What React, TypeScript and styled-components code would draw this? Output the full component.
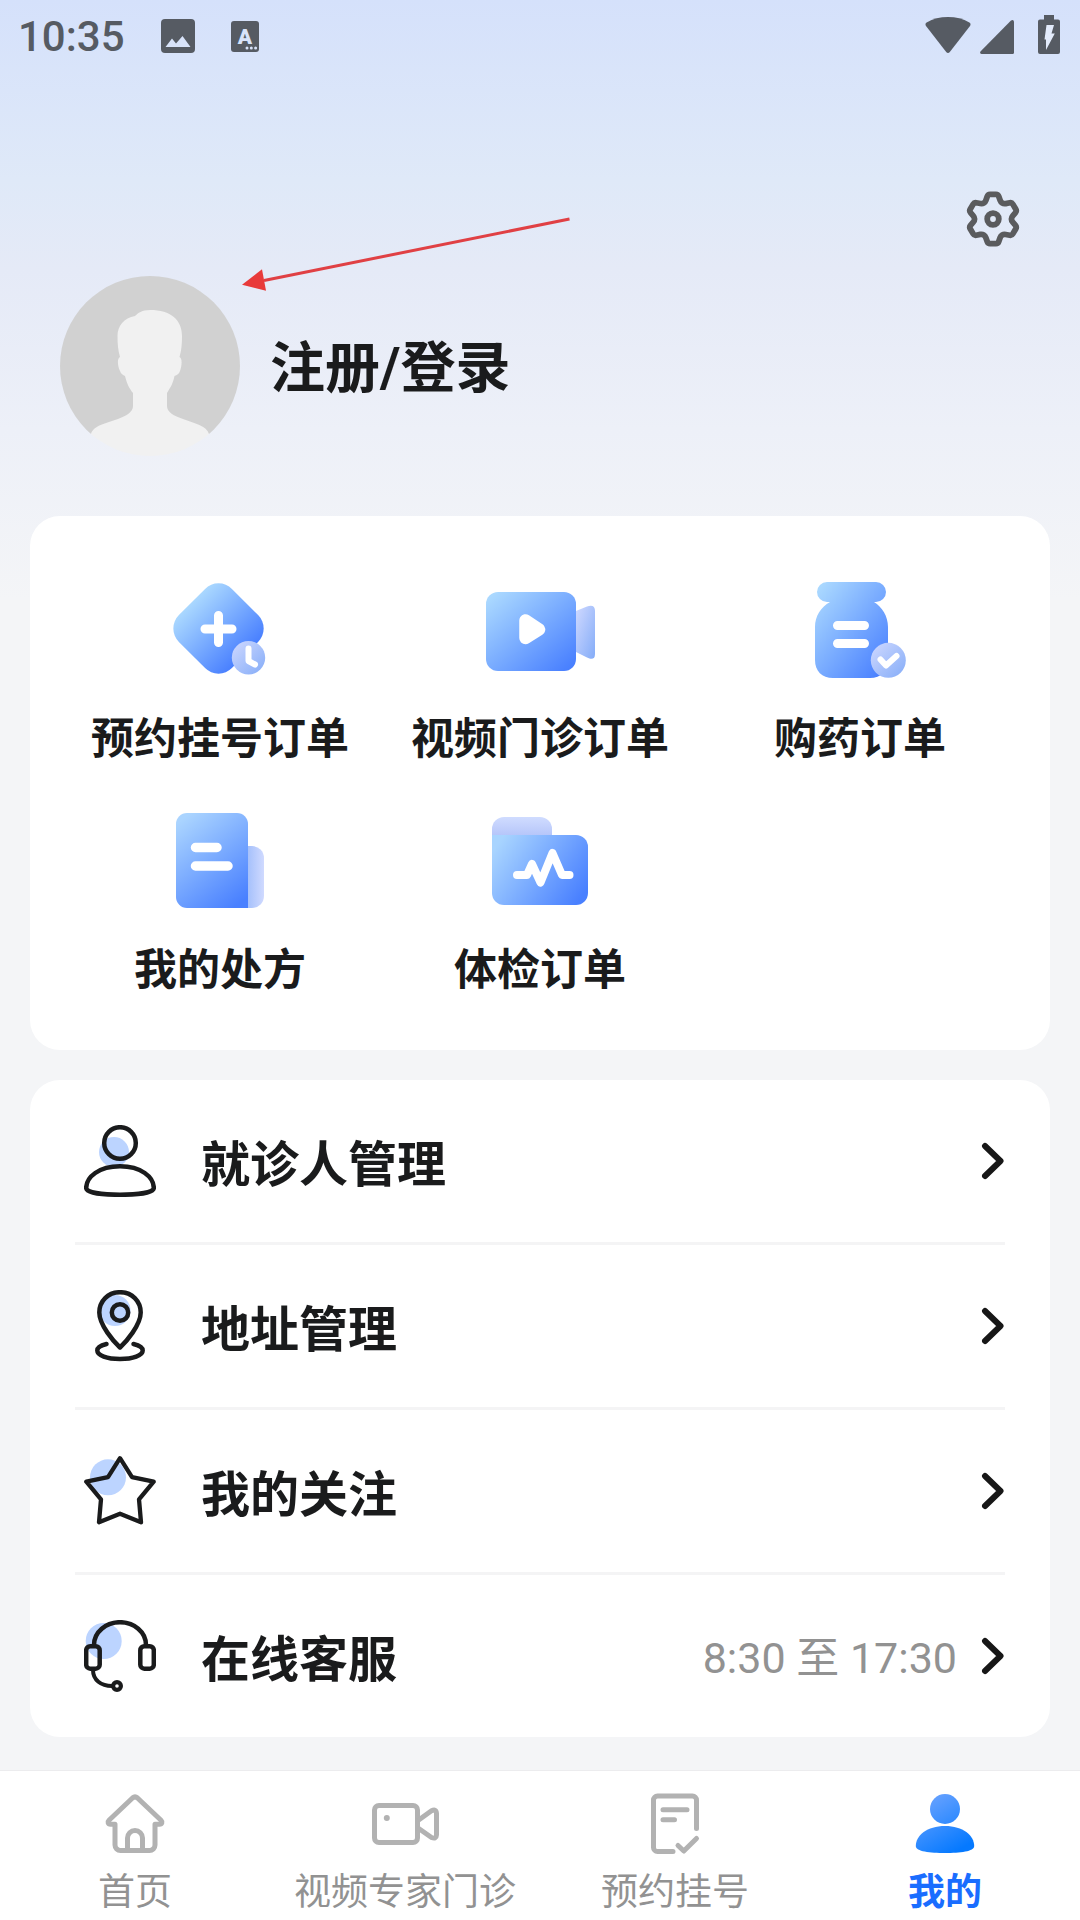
import React from "react";
import styled, { createGlobalStyle } from "styled-components";

const ink = "#1a1b1c";
const statusInk = "#565b63";
const cjkStack = '"Noto Sans CJK SC", sans-serif';

const GlobalStyle = createGlobalStyle`
  * { box-sizing: border-box; }
  body {
    margin: 0;
    background: #f4f5f7;
    color: ${ink};
    font-family: Roboto, "Noto Sans CJK SC", sans-serif;
  }
  a { color: inherit; text-decoration: none; }
  button { border: 0; padding: 0; background: none; color: inherit; font: inherit; cursor: pointer; }
  svg { display: block; flex: none; }
`;

const Page = styled.div`
  position: relative;
  display: flex;
  flex-direction: column;
  min-height: 100vh;
  background: linear-gradient(180deg, #d5e1fb 0, #dfe9f8 180px, #e5eaf7 270px, #edf0f8 430px, #f4f5f7 600px, #f4f5f7 100%);
`;

const StatusBar = styled.div`
  display: flex;
  align-items: center;
  justify-content: space-between;
  height: 72px;
  padding: 0 20px 0 18px;
`;

const StatusGroup = styled.div<{ $gap: number }>`
  display: flex;
  align-items: center;
  gap: ${(p) => p.$gap}px;
`;

const BatterySlot = styled.span`
  padding-left: 15px;
`;

const Clock = styled.time`
  padding-top: 2px;
  font-size: 42px;
  line-height: 48px;
  font-weight: 500;
  color: ${statusInk};
`;

const Header = styled.header`
  display: flex;
  flex-direction: column;
  gap: 30px;
  padding: 120px 60px 60px;
`;

const SettingsButton = styled.button`
  align-self: flex-end;
`;

const LoginButton = styled.button`
  display: flex;
  align-items: center;
  align-self: flex-start;
  gap: 30px;
`;

const LoginText = styled.span`
  padding-top: 4px;
  font-size: 55px;
  line-height: 72px;
  font-weight: 700;
`;

const Main = styled.main`
  display: flex;
  flex: 1;
  flex-direction: column;
  gap: 30px;
  padding: 0 30px 33px;
`;

const Card = styled.section`
  border-radius: 30px;
  background: #fff;
`;

const OrderGrid = styled(Card)`
  display: grid;
  grid-template-columns: repeat(3, 1fr);
  row-gap: 36px;
  padding: 54px 30px;
`;

const OrderLink = styled.a`
  display: flex;
  flex-direction: column;
  align-items: center;
  gap: 15px;
  font-family: ${cjkStack};
  font-size: 43px;
  line-height: 60px;
  font-weight: 700;
  white-space: nowrap;
`;

const MenuCard = styled(Card)`
  padding: 0 45px;
`;

const MenuRow = styled.a`
  display: flex;
  align-items: center;
  gap: 45px;
  padding: 45px 0 45px 9px;
  & + & { border-top: 3px solid #f4f4f5; }
`;

const MenuLabel = styled.span`
  flex: 1;
  font-family: ${cjkStack};
  font-size: 49px;
  line-height: 72px;
  font-weight: 700;
`;

const MenuEnd = styled.span`
  display: flex;
  align-items: center;
  gap: 24px;
`;

const MenuNote = styled.span`
  padding-top: 4px;
  font-size: 43px;
  line-height: 60px;
  color: #929292;
`;

const TabBar = styled.nav`
  display: grid;
  grid-template-columns: repeat(4, 1fr);
  padding: 17px 0 7px;
  border-top: 1px solid #ececee;
  background: #fff;
`;

const Tab = styled.a<{ $active?: boolean }>`
  display: flex;
  flex-direction: column;
  align-items: center;
  gap: 5px;
  font-family: ${cjkStack};
  font-size: 37px;
  line-height: 48px;
  font-weight: ${(p) => (p.$active ? 700 : 400)};
  color: ${(p) => (p.$active ? "#1a6dff" : "#929292")};
  white-space: nowrap;
`;

const Pointer = styled.svg`
  position: absolute;
  top: 216px;
  left: 240px;
  pointer-events: none;
`;

type Pt = [number, number];

/* Closed polygon whose corners are softened by `r`. */
function roundedPath(pts: Pt[], r: number) {
  const n = pts.length;
  const toward = (a: Pt, b: Pt): Pt => {
    const len = Math.hypot(b[0] - a[0], b[1] - a[1]);
    const t = Math.min(r, len / 2) / len;
    return [a[0] + (b[0] - a[0]) * t, a[1] + (b[1] - a[1]) * t];
  };
  return (
    pts
      .map((p, i) => {
        const s = toward(p, pts[(i + n - 1) % n]);
        const e = toward(p, pts[(i + 1) % n]);
        return `${i ? "L" : "M"}${s[0].toFixed(2)} ${s[1].toFixed(2)}Q${p[0].toFixed(2)} ${p[1].toFixed(2)} ${e[0].toFixed(2)} ${e[1].toFixed(2)}`;
      })
      .join("") + "Z"
  );
}

const gearPoints: Pt[] = Array.from({ length: 6 }).flatMap((_, k) => {
  const a = (k * Math.PI) / 3;
  const rot = (x: number, y: number): Pt => [
    27 + x * Math.cos(a) - y * Math.sin(a),
    27 + x * Math.sin(a) + y * Math.cos(a),
  ];
  return [rot(-5, -24.6), rot(5, -24.6), rot(7.8, -16.8), rot(10.7, -15.1)];
});

const GearIcon = () => (
  <svg width="54" height="54" viewBox="0 0 54 54" fill="none" stroke="#5a5b5d" strokeLinejoin="round" overflow="visible" aria-hidden="true">
    <path d={roundedPath(gearPoints, 2)} strokeWidth="5.8" />
    <circle cx="27" cy="27" r="5.8" strokeWidth="5.8" />
  </svg>
);

const PictureIcon = () => (
  <svg width="34" height="34" viewBox="0 0 34 34" aria-hidden="true">
    <rect width="34" height="34" rx="4" fill={statusInk} />
    <path d="M4.500 28 L11 19.500 L15 24.500 L21.500 17 L29.500 28Z" fill="#d8e3f9" />
  </svg>
);

const InputMethodIcon = () => (
  <svg width="28" height="31" viewBox="0 0 28 31" aria-hidden="true">
    <rect width="28" height="31" rx="3" fill={statusInk} />
    <text x="14" y="22.500" textAnchor="middle" fontFamily="Roboto, sans-serif" fontWeight="900" fontSize="21" fill="#d8e3f9">A</text>
    <g fill="#d8e3f9">
      <circle cx="16" cy="27" r="1.500" />
      <circle cx="20.300" cy="27" r="1.500" />
      <circle cx="24.600" cy="27" r="1.500" />
    </g>
  </svg>
);

const WifiIcon = () => (
  <svg width="46" height="40" viewBox="0 1 46 40" aria-hidden="true">
    <path d="M23 38 q-1 0 -1.800 -1 L1 11 q-1.300 -2.200 .6 -3.400 C8 3.800 15 2 23 2 S38 3.800 44.400 7.600 q1.900 1.200 .6 3.400 L24.800 37 q-.8 1 -1.800 1Z" fill={statusInk} />
  </svg>
);

const SignalIcon = () => (
  <svg width="34" height="40" viewBox="0 1 34 40" aria-hidden="true">
    <path d="M1.500 39 q-2.400 -.5 -.8 -2.700 L31 5.500 q2.500 -1.500 3 1 V37.500 q0 1.500 -1.500 1.500Z" fill={statusInk} />
  </svg>
);

const BatteryIcon = () => (
  <svg width="22" height="40" viewBox="0 1 22 40" overflow="visible" aria-hidden="true">
    <path d="M6 0 H16 V4.500 H20 a2 2 0 0 1 2 2 V37 a2 2 0 0 1 -2 2 H2 a2 2 0 0 1 -2 -2 V6.500 a2 2 0 0 1 2 -2 H6Z" fill={statusInk} />
    <path d="M8.500 10 H16 L13.500 18.500 H16.800 L8 35 V24.500 H6.500Z" fill="#e3ebfb" />
  </svg>
);

const Avatar = () => (
  <svg width="180" height="180" viewBox="0 0 180 180" aria-hidden="true">
    <clipPath id="avatarClip"><circle cx="90" cy="90" r="90" /></clipPath>
    <g clipPath="url(#avatarClip)">
      <path d="M0 0H180V158H0Z" fill="#d1d1d1" />
      <path
        fill="#f1f1f1"
        d="M90 34 C82 34 78 37 75 40 C64 42 57.500 50 57.500 60 C57.500 68 58 74 60 81 C57 82 57.500 90 60 95 C61 98 63 99 65 100 C67 108 69 112 73 117 V130 C73 136 66 140 58 143 C46 147 33 150 31 158 V180 H149 V158 C147 150 134 147 123 143 C114 140 107 136 107 130 V117 C110 112 113 108 114.500 100 C117 99 119 98 120 95 C122 90 122.500 82 119.500 81 C121.500 74 122 68 122 60 C122 44 111 34 90 34Z"
      />
    </g>
  </svg>
);

/* The two blue ramps that all order icons share. */
const Ramps = ({ id }: { id: string }) => (
  <defs>
    <linearGradient id={`${id}-main`} x1="0" y1="0" x2="1" y2="1">
      <stop offset="0.060" stopColor="#aad8ff" />
      <stop offset="0.940" stopColor="#4980ff" />
    </linearGradient>
    <linearGradient id={`${id}-soft`} x1="0" y1="0" x2="1" y2="1">
      <stop offset="0" stopColor="#d0d9ff" />
      <stop offset="1" stopColor="#84acf8" />
    </linearGradient>
  </defs>
);

const OrderSvg = ({ id, children }: { id: string; children: React.ReactNode }) => (
  <svg width="120" height="120" viewBox="0 0 120 120" fill="none" strokeLinecap="round" strokeLinejoin="round" aria-hidden="true">
    <Ramps id={id} />
    {children}
  </svg>
);

const RegistrationIcon = () => (
  <OrderSvg id="reg">
    <linearGradient id="reg-tilt" x1="0" y1="0.5" x2="1" y2="0.5">
      <stop offset="0" stopColor="#aad8ff" />
      <stop offset="1" stopColor="#4980ff" />
    </linearGradient>
    <g transform="rotate(45 58.500 58.500)">
      <rect x="21" y="21" width="75" height="75" rx="19" fill="url(#reg-tilt)" />
    </g>
    <path d="M45 59H72M58.500 45.500V72.500" stroke="#fff" strokeWidth="9" />
    <circle cx="88.500" cy="87.700" r="16.700" fill="url(#reg-soft)" />
    <path d="M88.500 78.500V91L95 94.500" stroke="#fff" strokeWidth="6" />
  </OrderSvg>
);

const VideoOrderIcon = () => (
  <OrderSvg id="vid">
    <path d="M96 41 L107 36.500 C112 34.500 115 36 115 41 V84 C115 89 112 90 107 87.500 L96 82Z" fill="url(#vid-soft)" />
    <rect x="6" y="22" width="90" height="79" rx="12" fill="url(#vid-main)" />
    <path d="M45.500 50.500V68L59 59.500Z" fill="#fff" stroke="#fff" strokeWidth="12.500" />
  </OrderSvg>
);

const MedicineIcon = () => (
  <OrderSvg id="med">
    <path
      d="M27 12 H76 a10 10 0 0 1 0 20 H74 C82 37 88 46 88 57 V90 C88 101 81 108 70 108 H33 C22 108 15 101 15 90 V57 C15 46 21 37 30 32 H27 a10 10 0 0 1 0 -20Z"
      fill="url(#med-main)"
    />
    <path d="M37.500 55.500H64.500M37.500 73.500H64.500" stroke="#fff" strokeWidth="9" />
    <circle cx="88.300" cy="90.300" r="17.500" fill="url(#med-soft)" />
    <path d="M80.500 89.500L86 95.500L96.500 86" stroke="#fff" strokeWidth="6" />
  </OrderSvg>
);

const PrescriptionIcon = () => (
  <OrderSvg id="pre">
    <linearGradient id="pre-back" x1="0" y1="0" x2="1" y2="0">
      <stop offset="0" stopColor="#a3bffb" />
      <stop offset="1" stopColor="#d0daff" />
    </linearGradient>
    <linearGradient id="pre-front" x1="0.2" y1="0" x2="0.8" y2="1">
      <stop offset="0" stopColor="#aad4ff" />
      <stop offset="1" stopColor="#4980ff" />
    </linearGradient>
    <path d="M87 45 H92 a12 12 0 0 1 12 12 V95 a12 12 0 0 1 -12 12 H87Z" fill="url(#pre-back)" />
    <path d="M27 12 H77 a11 11 0 0 1 11 11 V107 H27 a11 11 0 0 1 -11 -11 V23 a11 11 0 0 1 11 -11Z" fill="url(#pre-front)" />
    <path d="M35.500 46.500H57M35.500 65H68" stroke="#fff" strokeWidth="9.500" />
  </OrderSvg>
);

const CheckupIcon = () => (
  <OrderSvg id="chk">
    <linearGradient id="chk-tab" x1="0" y1="0" x2="0" y2="1">
      <stop offset="0" stopColor="#d0dcff" />
      <stop offset="1" stopColor="#b6c6fa" />
    </linearGradient>
    <linearGradient id="chk-front" x1="0" y1="0.25" x2="1" y2="0.75">
      <stop offset="0" stopColor="#a8d4ff" />
      <stop offset="1" stopColor="#4980ff" />
    </linearGradient>
    <g transform="translate(2 0)">
      <path d="M10 34 V28 a12 12 0 0 1 12 -12 H58 a12 12 0 0 1 12 12 V34Z" fill="url(#chk-tab)" />
      <path d="M10 34 H94 a12 12 0 0 1 12 12 V92 a12 12 0 0 1 -12 12 H22 a12 12 0 0 1 -12 -12Z" fill="url(#chk-front)" />
      <path d="M35 74H45L50 63L58.500 81.500L70.500 52L80 74H87.500" stroke="#fff" strokeWidth="8" />
    </g>
  </OrderSvg>
);

const MenuSvg = ({ children }: { children: React.ReactNode }) => (
  <svg width="72" height="72" viewBox="0 0 72 72" fill="none" stroke={ink} strokeWidth="4.500" strokeLinecap="round" strokeLinejoin="round" aria-hidden="true">
    {children}
  </svg>
);

const dot = { fill: "#bcd4ff", stroke: "none" };

const PatientIcon = () => (
  <MenuSvg>
    <circle cx="30" cy="27" r="15" {...dot} />
    <circle cx="36" cy="18" r="15.800" />
    <path fill="#fff" d="M36 41.200C15 41.200 2.200 52 2.200 63C2.200 67.500 18 69.800 36 69.800S69.800 67.500 69.800 63C69.800 52 57 41.200 36 41.200Z" />
  </MenuSvg>
);

const AddressIcon = () => (
  <MenuSvg>
    <circle cx="31" cy="20.500" r="15.500" {...dot} />
    <path d="M36 57.500C30 52 15.300 35 15.300 22.500C15.300 11 24 2.200 36 2.200S56.700 11 56.700 22.500C56.700 35 42 52 36 57.500Z" />
    <circle cx="36" cy="22.500" r="8.200" />
    <path d="M22.500 54C16 55.500 13.300 58 13.300 60.500C13.300 65.500 23 69 36 69S58.700 65.500 58.700 60.500C58.700 58 56 55.500 49.500 54" />
  </MenuSvg>
);

const StarIcon = () => (
  <MenuSvg>
    <circle cx="24" cy="22.300" r="18" {...dot} />
    <path strokeWidth="4.300" d="M36 3.200L48 22.200L69.700 26.700L55 44.300L57 67.300L36 58.700L15 67.300L17 44.300L2.300 26.700L24 22.200Z" />
  </MenuSvg>
);

const HeadsetIcon = () => (
  <MenuSvg>
    <circle cx="19.700" cy="21" r="18" {...dot} />
    <path d="M10 25C10 12 22 2.200 36 2.200S62 12 62 25" />
    <rect x="2.200" y="26.200" width="13.500" height="22.500" rx="4" />
    <rect x="56.300" y="26.200" width="13.500" height="22.500" rx="4" />
    <path d="M9 50C9 60 17 66 28 66" strokeWidth="4" />
    <circle cx="33" cy="66" r="3.900" strokeWidth="4.200" />
  </MenuSvg>
);

const ChevronIcon = () => (
  <svg width="24" height="40" viewBox="0 0 24 40" fill="none" stroke="#171717" strokeWidth="6" strokeLinecap="round" strokeLinejoin="round" aria-hidden="true">
    <path d="M4 5L19.500 20L4 35" />
  </svg>
);

const TabSvg = ({ children }: { children: React.ReactNode }) => (
  <svg width="72" height="72" viewBox="0 0 72 72" fill="none" stroke="#b2b2b2" strokeWidth="5" strokeLinecap="round" strokeLinejoin="round" aria-hidden="true">
    {children}
  </svg>
);

const HomeIcon = () => (
  <TabSvg>
    <path d="M16 36.200H11.500C9 36.200 8.300 34 10 32.300L33.500 10Q36 7.800 38.500 10L62 32.300C63.700 34 63 36.200 60.500 36.200H56V57a5.500 5.500 0 0 1 -5.500 5.500H21.500a5.500 5.500 0 0 1 -5.500 -5.500Z" />
    <path d="M28.500 62V50a7.500 7.500 0 0 1 15 0V62" strokeLinecap="butt" />
  </TabSvg>
);

const VideoTabIcon = () => (
  <TabSvg>
    <rect x="5.500" y="17.500" width="43" height="37" rx="4.500" />
    <path d="M49 32.500L62.500 22.800Q67.300 20.500 67.500 25.500V47Q67.300 51.500 62.500 49.500L49 40" strokeLinecap="butt" />
    <circle cx="17.800" cy="30" r="3" fill="#b2b2b2" stroke="none" />
  </TabSvg>
);

const BookingIcon = () => (
  <TabSvg>
    <path d="M57.500 40.500V12a4 4 0 0 0 -4 -4H18.500a4 4 0 0 0 -4 4V59.500a4 4 0 0 0 4 4H34" />
    <path d="M24 21.800H48M24 31.800H35.500" />
    <path d="M39 57.500L44.800 63L57.500 50.500" />
  </TabSvg>
);

const ProfileIcon = () => (
  <svg width="72" height="72" viewBox="0 0 72 72" aria-hidden="true">
    <linearGradient id="me" gradientUnits="userSpaceOnUse" x1="18" y1="8" x2="50" y2="62">
      <stop offset="0" stopColor="#6aa3ff" />
      <stop offset="1" stopColor="#0579ff" />
    </linearGradient>
    <circle cx="36" cy="21" r="15" fill="url(#me)" />
    <path d="M36 38C18 38 6.800 47.500 6.800 58C6.800 63.500 21 65 36 65S65.200 63.500 65.200 58C65.200 47.500 54 38 36 38Z" fill="url(#me)" />
  </svg>
);

const orders = [
  { label: "预约挂号订单", Icon: RegistrationIcon },
  { label: "视频门诊订单", Icon: VideoOrderIcon },
  { label: "购药订单", Icon: MedicineIcon },
  { label: "我的处方", Icon: PrescriptionIcon },
  { label: "体检订单", Icon: CheckupIcon },
];

const menu = [
  { label: "就诊人管理", Icon: PatientIcon },
  { label: "地址管理", Icon: AddressIcon },
  { label: "我的关注", Icon: StarIcon },
  { label: "在线客服", Icon: HeadsetIcon, note: "8:30 至 17:30" },
];

const tabs = [
  { label: "首页", Icon: HomeIcon },
  { label: "视频专家门诊", Icon: VideoTabIcon },
  { label: "预约挂号", Icon: BookingIcon },
  { label: "我的", Icon: ProfileIcon, active: true },
];

export default function App() {
  return (
    <Page lang="zh-CN">
      <GlobalStyle />
      <StatusBar>
        <StatusGroup $gap={36}>
          <Clock>10:35</Clock>
          <PictureIcon />
          <InputMethodIcon />
        </StatusGroup>
        <StatusGroup $gap={9}>
          <WifiIcon />
          <SignalIcon />
          <BatterySlot>
            <BatteryIcon />
          </BatterySlot>
        </StatusGroup>
      </StatusBar>
      <Header>
        <SettingsButton type="button" aria-label="设置">
          <GearIcon />
        </SettingsButton>
        <LoginButton type="button">
          <Avatar />
          <LoginText>注册/登录</LoginText>
        </LoginButton>
      </Header>
      <Main>
        <OrderGrid>
          {orders.map(({ label, Icon }) => (
            <OrderLink key={label} href="#">
              <Icon />
              {label}
            </OrderLink>
          ))}
        </OrderGrid>
        <MenuCard>
          {menu.map(({ label, Icon, note }) => (
            <MenuRow key={label} href="#">
              <Icon />
              <MenuLabel>{label}</MenuLabel>
              <MenuEnd>
                {note && <MenuNote>{note}</MenuNote>}
                <ChevronIcon />
              </MenuEnd>
            </MenuRow>
          ))}
        </MenuCard>
      </Main>
      <TabBar>
        {tabs.map(({ label, Icon, active }) => (
          <Tab key={label} href="#" $active={active} aria-current={active ? "page" : undefined}>
            <Icon />
            {label}
          </Tab>
        ))}
      </TabBar>
      <Pointer width="332" height="80" viewBox="0 0 332 80" aria-hidden="true">
        <path d="M24 64.500L329.500 3" stroke="#e04044" strokeWidth="3" />
        <path d="M2 68.700L22 53.300L26 74.700Z" fill="#e83a3a" />
      </Pointer>
    </Page>
  );
}
